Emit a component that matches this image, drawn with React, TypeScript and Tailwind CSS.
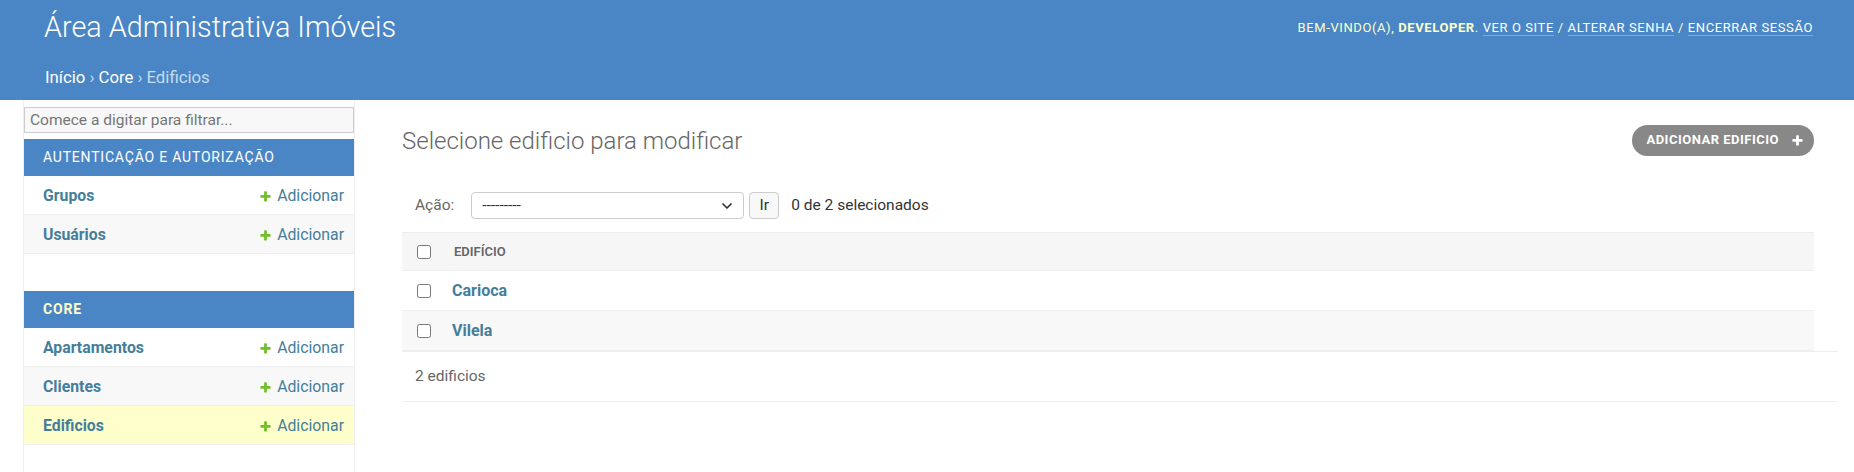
import { ChevronDown } from "lucide-react";

const link = "text-[#447e9b]";

function PlusIcon({ className = "", color = "#70bf2b" }: { className?: string; color?: string }) {
  return (
    <svg viewBox="0 0 1792 1792" className={className} aria-hidden="true">
      <path
        fill={color}
        d="M1600 796v192q0 40-28 68t-68 28h-416v416q0 40-28 68t-68 28h-192q-40 0-68-28t-28-68v-416h-416q-40 0-68-28t-28-68v-192q0-40 28-68t68-28h416v-416q0-40 28-68t68-28h192q40 0 68 28t28 68v416h416q40 0 68 28t28 68z"
      />
    </svg>
  );
}

type Model = { name: string; current?: boolean };

const apps: { label: string; current?: boolean; models: Model[] }[] = [
  {
    label: "Autenticação e Autorização",
    models: [{ name: "Grupos" }, { name: "Usuários" }],
  },
  {
    label: "Core",
    current: true,
    models: [{ name: "Apartamentos" }, { name: "Clientes" }, { name: "Edificios", current: true }],
  },
];

const rows = ["Carioca", "Vilela"];

function Sidebar() {
  return (
    <aside className="w-[331px] shrink-0 border-r border-[#eee] pt-[7px]">
      <input
        type="search"
        placeholder="Comece a digitar para filtrar..."
        className="block h-[26px] w-full border border-[#ccc] bg-[#f8f8f8] px-[5px] text-[15.5px] text-[#333] placeholder:text-[#757575]"
      />
      <div className="mt-[6px]">
        {apps.map((app) => (
          <div key={app.label} className="mb-[37px]">
            <div
              className={`flex h-[37px] items-center bg-[#4a86c6] pl-[19px] text-[14px] uppercase tracking-[0.8px] ${
                app.current ? "font-bold text-[#ffc]" : "text-white"
              }`}
            >
              {app.label}
            </div>
            {app.models.map((m, i) => (
              <div
                key={m.name}
                className={`flex h-[39px] items-center justify-between border-b border-[#eee] pl-[19px] pr-[10px] pt-[2px] text-[15.8px] ${
                  m.current ? "bg-[#ffc]" : i % 2 ? "bg-[#f8f8f8]" : "bg-white"
                }`}
              >
                <a className={`${link} font-bold`}>{m.name}</a>
                <a className={`${link} flex items-center gap-[5px]`}>
                  <PlusIcon className="h-[13px] w-[13px]" />
                  Adicionar
                </a>
              </div>
            ))}
          </div>
        ))}
      </div>
    </aside>
  );
}

function Checkbox() {
  return <input type="checkbox" className="h-[14px] w-[14px] align-middle" />;
}

export default function App() {
  return (
    <div className="min-h-[472px] bg-white font-['Roboto',sans-serif] text-[#333]">
      <header className="bg-[#4a86c6]">
        <div className="flex h-[56px] items-center justify-between pl-[44px] pr-[41px]">
          <h1 className="text-[28.8px] font-light text-white">Área Administrativa Imóveis</h1>
          <div className="text-[13px] uppercase tracking-[0.6px] text-[#ffc]">
            Bem-vindo(a), <strong className="font-bold">developer</strong>.{" "}
            <a className="border-b border-white/30 text-white">Ver o site</a> /{" "}
            <a className="border-b border-white/30 text-white">Alterar senha</a> /{" "}
            <a className="border-b border-white/30 text-white">Encerrar sessão</a>
          </div>
        </div>
        <nav className="flex h-[44px] items-center pl-[45px] text-[16.8px] text-[#c4dcf0]">
          <a className="text-white">Início</a>
          <span className="px-[4px]">›</span>
          <a className="text-white">Core</a>
          <span className="px-[4px]">›</span>
          <span>Edificios</span>
        </nav>
      </header>

      <div className="flex min-h-[372px]">
        <div className="w-[24px] shrink-0 border-r border-[#eee]" />
        <Sidebar />

        <main className="min-w-0 flex-1 pl-[47px] pr-[16px] pt-[21px]">
          <div className="mr-[24px] flex items-center justify-between">
            <h2 className="pt-[2px] text-[24px] font-light text-[#666]">Selecione edificio para modificar</h2>
            <a className="flex h-[31px] items-center gap-[12px] rounded-full bg-[#888] pl-[14px] pr-[10px] text-[13px] font-bold uppercase tracking-[0.5px] text-white">
              Adicionar edificio
              <PlusIcon color="#fff" className="h-[13px] w-[13px]" />
            </a>
          </div>

          <div className="mr-[24px] mt-[33px] flex h-[27px] items-center pl-[13px] text-[15.5px]">
            <label className="mr-[17px] text-[#666]">Ação:</label>
            <div className="relative h-[27px] w-[273px]">
              <select className="h-full w-full appearance-none rounded-[4px] border border-[#ccc] bg-white pl-[10px] text-[15.5px] text-[#333]">
                <option>---------</option>
              </select>
              <ChevronDown
                className="pointer-events-none absolute right-[9px] top-1/2 h-[16px] w-[16px] -translate-y-1/2 text-[#333]"
                strokeWidth={2.6}
              />
            </div>
            <button className="ml-[5px] h-[27px] w-[30px] rounded-[4px] border border-[#ccc] bg-[#f8f8f8] text-[15.5px] text-[#333]">
              Ir
            </button>
            <span className="ml-[12px] text-[#333]">0 de 2 selecionados</span>
          </div>

          <table className="mt-[13px] w-[calc(100%-24px)] border-collapse text-left">
            <thead>
              <tr className="h-[38px] border-y border-[#eee] bg-[#f6f6f6]">
                <th className="w-[40px] pl-[15px] align-middle">
                  <Checkbox />
                </th>
                <th className="pl-[12px] text-[13px] font-semibold uppercase text-[#666]">Edifício</th>
              </tr>
            </thead>
            <tbody>
              {rows.map((r, i) => (
                <tr key={r} className={`h-[40px] border-b border-[#eee] ${i % 2 ? "bg-[#f8f8f8]" : "bg-white"}`}>
                  <td className="pl-[15px] align-middle">
                    <Checkbox />
                  </td>
                  <td className="pl-[10px] text-[16px] font-bold">
                    <a className={link}>{r}</a>
                  </td>
                </tr>
              ))}
            </tbody>
          </table>

          <p className="flex h-[51px] items-center border-y border-[#eee] pl-[13px] text-[15.5px] text-[#666]">2 edificios</p>
        </main>
      </div>
    </div>
  );
}
